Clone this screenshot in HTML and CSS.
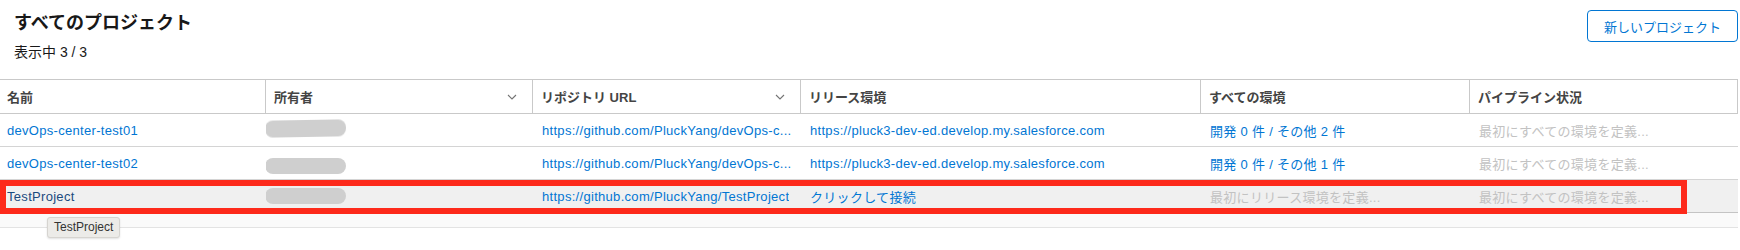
FILE: index.html
```html
<!DOCTYPE html>
<html lang="ja">
<head>
    <meta charset="UTF-8">
    <title>すべてのプロジェクト</title>
    <link rel="stylesheet" href="styles.css">
</head>
<body>

    <header class="list-header">
        <div class="titles">
            <h1 class="list-title">すべてのプロジェクト</h1>
            <p class="list-count">表示中 3 / 3</p>
        </div>
        <button class="btn-new">新しいプロジェクト</button>
    </header>

    <div class="table">

        <div class="row row-head">
            <div class="th th-first">名前</div>
            <div class="th">所有者
                <svg class="chev" viewBox="0 0 10 6"><polyline points="1,1 5,5 9,1"/></svg>
            </div>
            <div class="th">リポジトリ URL
                <svg class="chev" viewBox="0 0 10 6"><polyline points="1,1 5,5 9,1"/></svg>
            </div>
            <div class="th">リリース環境</div>
            <div class="th">すべての環境</div>
            <div class="th">パイプライン状況</div>
        </div>

        <div class="row">
            <div class="td td-first"><a class="link" href="#">devOps-center-test01</a></div>
            <div class="td td-owner"><span class="redact redact-1"></span></div>
            <div class="td"><a class="link" href="#" title="https://github.com/PluckYang/devOps-center-test01">https://github.com/PluckYang/devOps-c...</a></div>
            <div class="td"><a class="link" href="#">https://pluck3-dev-ed.develop.my.salesforce.com</a></div>
            <div class="td"><a class="link" href="#">開発 0 件 / その他 2 件</a></div>
            <div class="td"><span class="muted">最初にすべての環境を定義...</span></div>
        </div>

        <div class="row">
            <div class="td td-first"><a class="link" href="#">devOps-center-test02</a></div>
            <div class="td td-owner"><span class="redact redact-2"></span></div>
            <div class="td"><a class="link" href="#" title="https://github.com/PluckYang/devOps-center-test02">https://github.com/PluckYang/devOps-c...</a></div>
            <div class="td"><a class="link" href="#">https://pluck3-dev-ed.develop.my.salesforce.com</a></div>
            <div class="td"><a class="link" href="#">開発 0 件 / その他 1 件</a></div>
            <div class="td"><span class="muted">最初にすべての環境を定義...</span></div>
        </div>

        <div class="row row-selected">
            <div class="td td-first"><a class="link link-active" href="#">TestProject</a></div>
            <div class="td td-owner"><span class="redact redact-3"></span></div>
            <div class="td"><a class="link" href="#">https://github.com/PluckYang/TestProject</a></div>
            <div class="td"><a class="link" href="#">クリックして接続</a></div>
            <div class="td"><span class="muted">最初にリリース環境を定義...</span></div>
            <div class="td"><span class="muted">最初にすべての環境を定義...</span></div>
        </div>

        <div class="table-foot"></div>

        <!-- annotation + hover tooltip lie over the rows -->
        <div class="mark"></div>
        <div class="tooltip">TestProject</div>

    </div>

</body>
</html>
```

FILE: styles.css
```css
* {
    box-sizing: border-box;
}
html, body {
    min-height: 250px;
}
body {
    margin: 0;
    font-family: "Liberation Sans", "Noto Sans CJK JP", sans-serif;
    font-size: 13px;
    color: #181818;
    background-color: white;
}
.list-header {
    display: flex;
    justify-content: space-between;
    align-items: flex-start;
    height: 79px;
    padding: 10px 2px 0 14px;
}
.list-title {
    margin: 1px 0 0;
    font-size: 18px;
    line-height: 24px;
    font-weight: 700;
    color: #181818;
}
.list-count {
    margin: 8px 0 0;
    font-size: 14px;
    line-height: 18px;
    color: #181818;
}
.btn-new {
    height: 32px;
    padding: 0 16px;
    border: 1px solid #0176d3;
    border-radius: 4px;
    background-color: white;
    color: #0176d3;
    font-family: inherit;
    font-size: 13px;
}
.table {
    position: relative;
    width: 1738px;
}
.row {
    display: grid;
    grid-template-columns: 266px 267px 268px 400px 269px 268px;
    height: 33px;
    border-bottom: 1px solid #d4d4d4;
}
.row-head {
    height: 35px;
    border-top: 1px solid #c9c9c9;
    border-bottom: 1px solid #c9c9c9;
}
.th {
    display: flex;
    align-items: center;
    justify-content: space-between;
    padding: 0 15px 0 8px;
    font-weight: 700;
    color: #444444;
    border-right: 1px solid #c9c9c9;
    white-space: nowrap;
}
.th-first {
    padding-left: 7px;
}
.chev {
    width: 10px;
    height: 6px;
    fill: none;
    stroke: #747474;
    stroke-width: 1.1;
}
.td {
    display: flex;
    align-items: center;
    padding: 0 7px 0 9px;
    white-space: nowrap;
    overflow: hidden;
    letter-spacing: 0.3px;
}
.td-first {
    padding-left: 7px;
}
.td-owner {
    padding-left: 0;
}
.link {
    color: #0176d3;
    text-decoration: none;
    overflow: hidden;
    text-overflow: ellipsis;
}
.link-active {
    color: #1b4a7e;
}
.muted {
    color: #c2c2c2;
}
.row-selected {
    background-color: #f0f0f0;
    border-bottom-color: #c4c4c4;
}
.redact {
    display: block;
    width: 81px;
    height: 16px;
    margin-left: -1px;
    border-radius: 8px;
    background-color: #cfcfcf;
    filter: blur(0.6px);
}
.redact-1 {
    height: 17px;
    transform: translateY(-2px) rotate(-1deg);
}
.redact-2 {
    transform: translateY(3px);
}
.table-foot {
    height: 15px;
    background-color: #fafafa;
    border-bottom: 1px solid #e3e3e3;
}
.mark {
    position: absolute;
    left: 0;
    top: 101px;
    width: 1687px;
    height: 34px;
    border: 6px solid #fd2a1b;
}
.tooltip {
    position: absolute;
    left: 47px;
    top: 138px;
    padding: 2px 6px;
    font-size: 12px;
    line-height: 15px;
    color: #333333;
    background-color: #ecebe8;
    border: 1px solid #d6d4d0;
    border-radius: 3px;
    box-shadow: 0 1px 2px rgba(0, 0, 0, 0.12);
}
```
